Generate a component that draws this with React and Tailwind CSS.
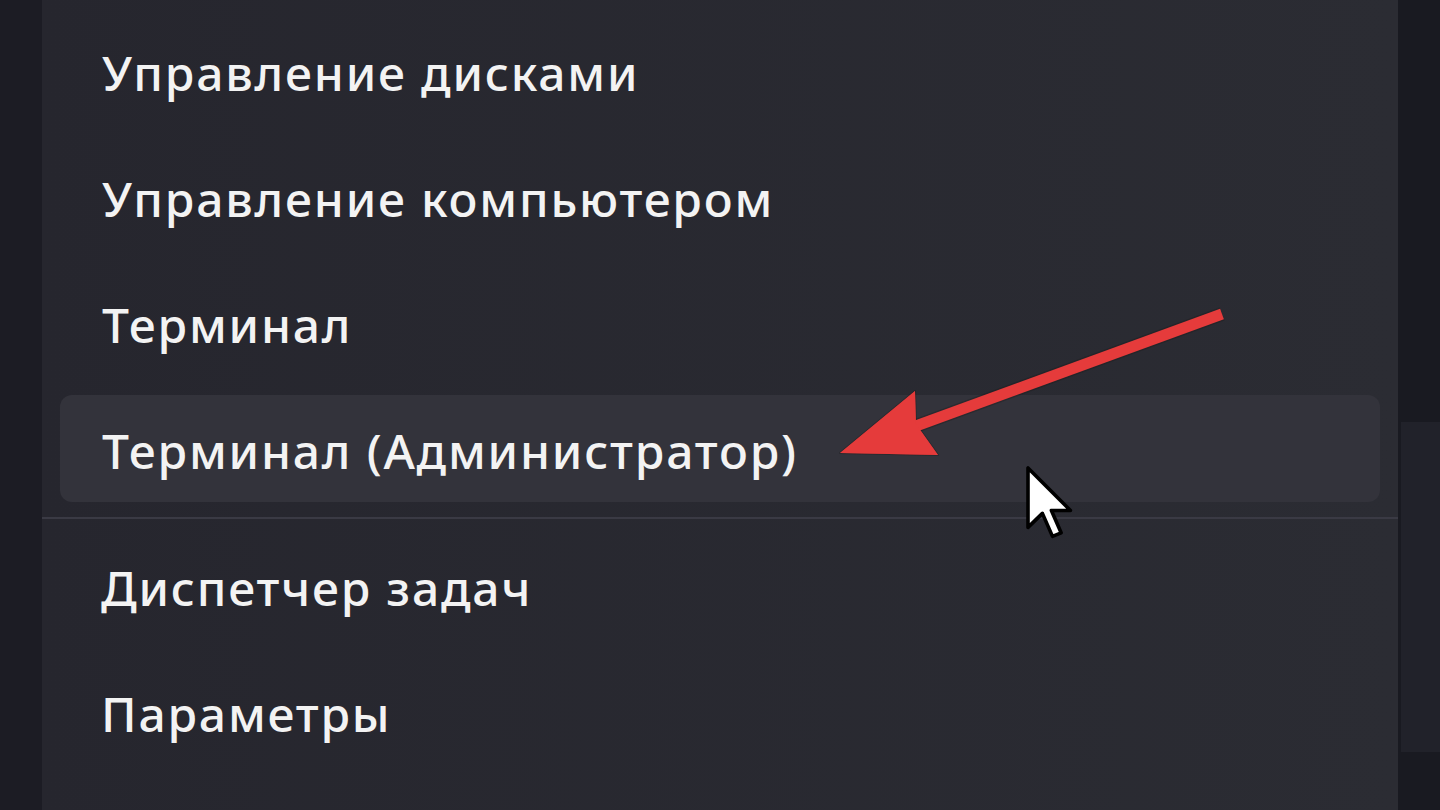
export default function App() {
  const top = ["Управление дисками", "Управление компьютером", "Терминал", "Терминал (Администратор)"];
  const bottom = ["Диспетчер задач", "Параметры"];
  const font = { fontFamily: '"Noto Sans", "Open Sans", sans-serif' };
  return (
    <div className="relative w-[1440px] h-[810px] overflow-hidden flex bg-[#1c1c24]" style={font}>
      <div className="w-[42px] shrink-0 bg-[#1c1c24]" />
      <div className="w-[1356px] shrink-0 h-full bg-gradient-to-r from-[#26262e] to-[#2b2c33] pt-[17px] flex flex-col">
        <div className="flex flex-col gap-[19px] px-[18px]">
          {top.map((t, i) => (
            <div
              key={t}
              className={`h-[107px] rounded-[12px] flex items-center pl-[42px] pt-[4px] text-[48px] font-medium tracking-[1.8px] text-[#f3f3f3] ${i === 3 ? "bg-[#33333b]" : ""}`}
            >
              {t}
            </div>
          ))}
        </div>
        <div className="h-[2px] bg-[#3a3a44] mt-[15px] mb-[13px]" />
        <div className="flex flex-col gap-[19px] px-[18px]">
          {bottom.map((t) => (
            <div key={t} className="h-[107px] rounded-[12px] flex items-center pl-[41px] pt-[4px] text-[48px] font-medium tracking-[1.8px] text-[#f3f3f3]">
              {t}
            </div>
          ))}
        </div>
      </div>
      <div className="flex-1 flex flex-col bg-[#191a21]">
        <div className="h-[422px]" />
        <div className="h-[330px] ml-[3px] bg-[#21222a]" />
        <div className="flex-1" />
      </div>
      <svg className="absolute inset-0 pointer-events-none" width="1440" height="810" viewBox="0 0 1440 810">
        <line x1="1222" y1="314" x2="905" y2="430" stroke="#1a1a1a" strokeOpacity="0.35" strokeWidth="14" />
        <polygon points="840,453 915,391 916,424 938,455" fill="#e53b3b" stroke="#1a1a1a" strokeOpacity="0.35" strokeWidth="2" strokeLinejoin="round" />
        <line x1="1222" y1="314" x2="905" y2="430" stroke="#e53b3b" strokeWidth="11" />
        <polygon points="840,453 915,391 916,424 938,455" fill="#e53b3b" />
        <g transform="translate(1028,468) scale(3.6)">
          <path d="M0 0 L0 16.5 L4 12.6 L6.8 19 L9.2 18 L6.5 11.8 L11.8 11.8 Z" fill="#ffffff" stroke="#000000" strokeWidth="1" strokeLinejoin="round" />
        </g>
      </svg>
    </div>
  );
}
